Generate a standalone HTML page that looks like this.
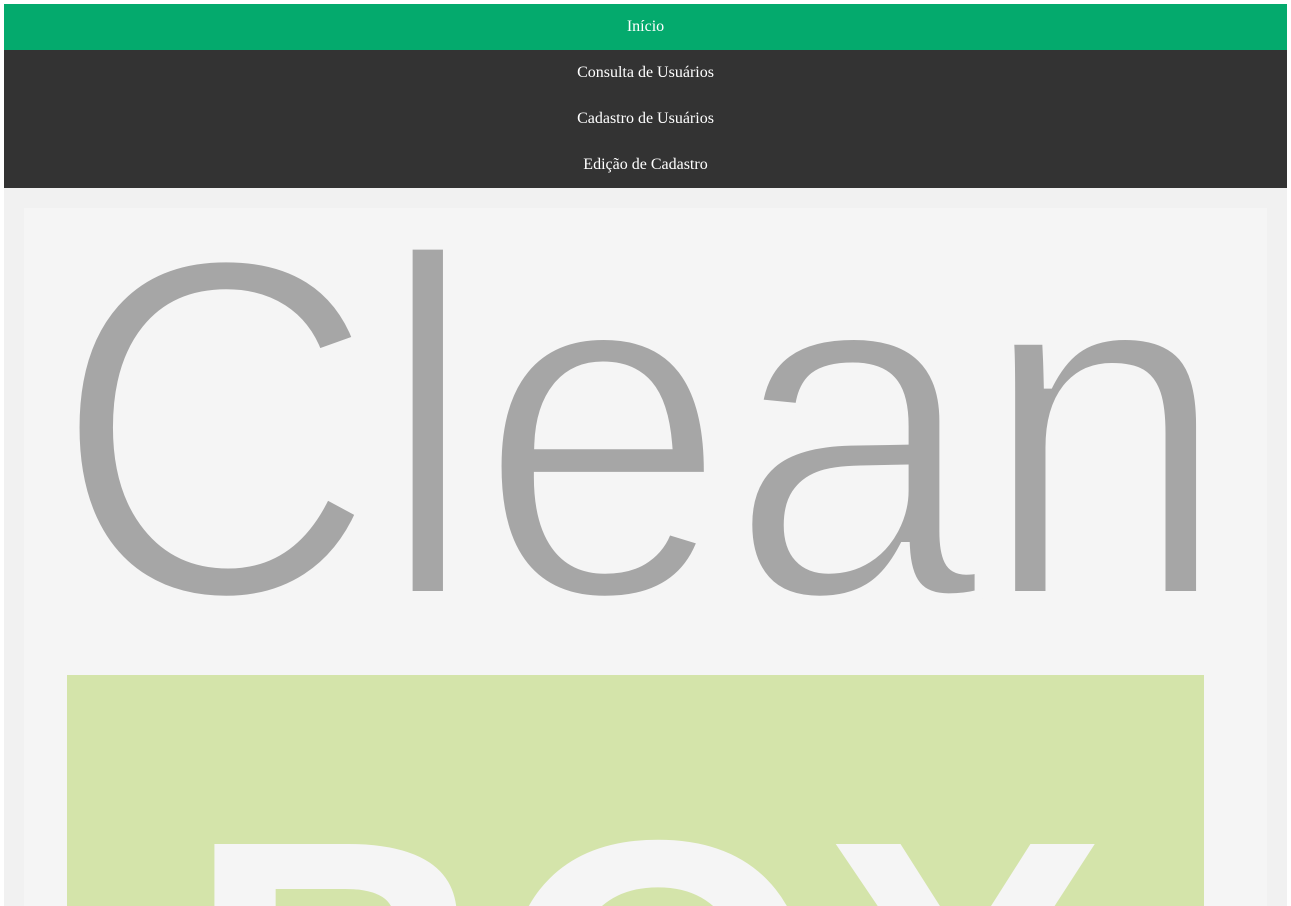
<!DOCTYPE html>
<html><head><meta charset="utf-8"><style>
html,body{margin:0;padding:0;background:#fff;}
body{width:1291px;height:906px;overflow:hidden;position:relative;}
nav{position:absolute;left:4px;top:4px;width:1283px;}
nav a{display:block;height:46px;line-height:46px;text-align:center;color:#fff;font-family:"Liberation Serif",serif;font-size:16px;text-decoration:none;background:#333;}
nav a.active{background:#04aa6d;}
.main{position:absolute;left:4px;top:188px;width:1283px;height:718px;background:#f1f1f1;}
svg{position:absolute;left:24px;top:208px;overflow:hidden;}
</style></head><body>
<nav>
<a class="active">Início</a>
<a>Consulta de Usuários</a>
<a>Cadastro de Usuários</a>
<a>Edição de Cadastro</a>
</nav>
<div class="main"></div>
<svg width="1243" height="698" viewBox="24 208 1243 698">
<rect x="24" y="208" width="1243" height="698" fill="#f5f5f5"/>
<text x="52" y="596" font-family="Liberation Sans, sans-serif" font-size="485" fill="#a6a6a6" stroke="#f5f5f5" stroke-width="10" textLength="1178" lengthAdjust="spacingAndGlyphs">Clean</text>
<rect x="67" y="675" width="1137" height="240" fill="#d4e4aa"/>
<text x="186" y="1133" font-family="Liberation Sans, sans-serif" font-weight="bold" font-size="420" fill="#f5f5f5" textLength="921" lengthAdjust="spacingAndGlyphs">BOX</text>
</svg>
</body></html>
